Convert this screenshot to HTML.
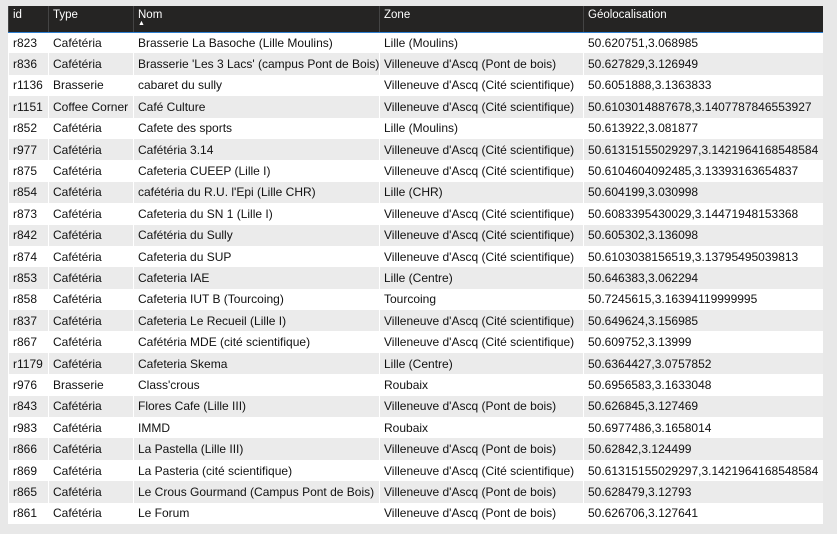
<!DOCTYPE html><html><head><meta charset="utf-8"><style>
body{margin:0;width:837px;height:534px;background:#e8e8e8;font-family:"Liberation Sans",sans-serif;overflow:hidden}
table{position:absolute;left:8px;top:6px;width:815px;border-collapse:collapse;table-layout:fixed;font-size:12px;color:#111}
th{background:#252423;color:#fff;font-weight:normal;text-align:left;vertical-align:top;padding:3px 4px 0;border-bottom:1px solid #2f7fd0;border-left:1px solid #444;font-size:11.5px;box-sizing:border-box;height:26px}
td{height:21.4px;padding:0 4px;white-space:nowrap;overflow:hidden;border-left:1px solid #fff;box-sizing:border-box}
tr:nth-child(odd) td{background:#fff}
tr:nth-child(even) td{background:#ebebeb}
</style></head><body><table>
<colgroup><col style="width:40px"><col style="width:85px"><col style="width:246px"><col style="width:204px"><col></colgroup>
<thead><tr><th>id</th><th>Type</th><th>Nom<div style="font-size:7px;line-height:6px">▲</div></th><th>Zone</th><th>Géolocalisation</th></tr></thead><tbody>
<tr><td>r823</td><td>Cafétéria</td><td>Brasserie La Basoche (Lille Moulins)</td><td>Lille (Moulins)</td><td>50.620751,3.068985</td></tr>
<tr><td>r836</td><td>Cafétéria</td><td>Brasserie 'Les 3 Lacs' (campus Pont de Bois)</td><td>Villeneuve d'Ascq (Pont de bois)</td><td>50.627829,3.126949</td></tr>
<tr><td>r1136</td><td>Brasserie</td><td>cabaret du sully</td><td>Villeneuve d'Ascq (Cité scientifique)</td><td>50.6051888,3.1363833</td></tr>
<tr><td>r1151</td><td>Coffee Corner</td><td>Café Culture</td><td>Villeneuve d'Ascq (Cité scientifique)</td><td>50.6103014887678,3.1407787846553927</td></tr>
<tr><td>r852</td><td>Cafétéria</td><td>Cafete des sports</td><td>Lille (Moulins)</td><td>50.613922,3.081877</td></tr>
<tr><td>r977</td><td>Cafétéria</td><td>Cafétéria 3.14</td><td>Villeneuve d'Ascq (Cité scientifique)</td><td>50.61315155029297,3.1421964168548584</td></tr>
<tr><td>r875</td><td>Cafétéria</td><td>Cafeteria CUEEP (Lille I)</td><td>Villeneuve d'Ascq (Cité scientifique)</td><td>50.6104604092485,3.13393163654837</td></tr>
<tr><td>r854</td><td>Cafétéria</td><td>cafétéria du R.U. l'Epi (Lille CHR)</td><td>Lille (CHR)</td><td>50.604199,3.030998</td></tr>
<tr><td>r873</td><td>Cafétéria</td><td>Cafeteria du SN 1 (Lille I)</td><td>Villeneuve d'Ascq (Cité scientifique)</td><td>50.6083395430029,3.14471948153368</td></tr>
<tr><td>r842</td><td>Cafétéria</td><td>Cafétéria du Sully</td><td>Villeneuve d'Ascq (Cité scientifique)</td><td>50.605302,3.136098</td></tr>
<tr><td>r874</td><td>Cafétéria</td><td>Cafeteria du SUP</td><td>Villeneuve d'Ascq (Cité scientifique)</td><td>50.6103038156519,3.13795495039813</td></tr>
<tr><td>r853</td><td>Cafétéria</td><td>Cafeteria IAE</td><td>Lille (Centre)</td><td>50.646383,3.062294</td></tr>
<tr><td>r858</td><td>Cafétéria</td><td>Cafeteria IUT B (Tourcoing)</td><td>Tourcoing</td><td>50.7245615,3.16394119999995</td></tr>
<tr><td>r837</td><td>Cafétéria</td><td>Cafeteria Le Recueil (Lille I)</td><td>Villeneuve d'Ascq (Cité scientifique)</td><td>50.649624,3.156985</td></tr>
<tr><td>r867</td><td>Cafétéria</td><td>Cafétéria MDE (cité scientifique)</td><td>Villeneuve d'Ascq (Cité scientifique)</td><td>50.609752,3.13999</td></tr>
<tr><td>r1179</td><td>Cafétéria</td><td>Cafeteria Skema</td><td>Lille (Centre)</td><td>50.6364427,3.0757852</td></tr>
<tr><td>r976</td><td>Brasserie</td><td>Class'crous</td><td>Roubaix</td><td>50.6956583,3.1633048</td></tr>
<tr><td>r843</td><td>Cafétéria</td><td>Flores Cafe (Lille III)</td><td>Villeneuve d'Ascq (Pont de bois)</td><td>50.626845,3.127469</td></tr>
<tr><td>r983</td><td>Cafétéria</td><td>IMMD</td><td>Roubaix</td><td>50.6977486,3.1658014</td></tr>
<tr><td>r866</td><td>Cafétéria</td><td>La Pastella (Lille III)</td><td>Villeneuve d'Ascq (Pont de bois)</td><td>50.62842,3.124499</td></tr>
<tr><td>r869</td><td>Cafétéria</td><td>La Pasteria (cité scientifique)</td><td>Villeneuve d'Ascq (Cité scientifique)</td><td>50.61315155029297,3.1421964168548584</td></tr>
<tr><td>r865</td><td>Cafétéria</td><td>Le Crous Gourmand (Campus Pont de Bois)</td><td>Villeneuve d'Ascq (Pont de bois)</td><td>50.628479,3.12793</td></tr>
<tr><td>r861</td><td>Cafétéria</td><td>Le Forum</td><td>Villeneuve d'Ascq (Pont de bois)</td><td>50.626706,3.127641</td></tr>
</tbody></table></body></html>
